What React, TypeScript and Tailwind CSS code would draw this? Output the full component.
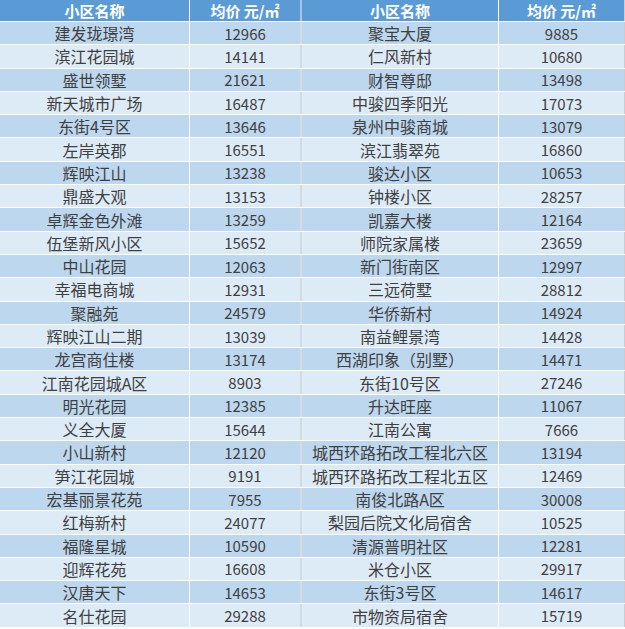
const rows: [string, string, string, string][] = [
  ["建发珑璟湾", "12966", "聚宝大厦", "9885"],
  ["滨江花园城", "14141", "仁风新村", "10680"],
  ["盛世领墅", "21621", "财智尊邸", "13498"],
  ["新天城市广场", "16487", "中骏四季阳光", "17073"],
  ["东街4号区", "13646", "泉州中骏商城", "13079"],
  ["左岸英郡", "16551", "滨江翡翠苑", "16860"],
  ["辉映江山", "13238", "骏达小区", "10653"],
  ["鼎盛大观", "13153", "钟楼小区", "28257"],
  ["卓辉金色外滩", "13259", "凯嘉大楼", "12164"],
  ["伍堡新风小区", "15652", "师院家属楼", "23659"],
  ["中山花园", "12063", "新门街南区", "12997"],
  ["幸福电商城", "12931", "三远荷墅", "28812"],
  ["聚融苑", "24579", "华侨新村", "14924"],
  ["辉映江山二期", "13039", "南益鲤景湾", "14428"],
  ["龙宫商住楼", "13174", "西湖印象（别墅）", "14471"],
  ["江南花园城A区", "8903", "东街10号区", "27246"],
  ["明光花园", "12385", "升达旺座", "11067"],
  ["义全大厦", "15644", "江南公寓", "7666"],
  ["小山新村", "12120", "城西环路拓改工程北六区", "13194"],
  ["笋江花园城", "9191", "城西环路拓改工程北五区", "12469"],
  ["宏基丽景花苑", "7955", "南俊北路A区", "30008"],
  ["红梅新村", "24077", "梨园后院文化局宿舍", "10525"],
  ["福隆星城", "10590", "清源普明社区", "12281"],
  ["迎辉花苑", "16608", "米仓小区", "29917"],
  ["汉唐天下", "14653", "东街3号区", "14617"],
  ["名仕花园", "29288", "市物资局宿舍", "15719"],
];

const font = "font-['Microsoft_YaHei','Noto_Sans_CJK_SC',sans-serif]";

export default function App() {
  return (
    <div className={`w-[625px] h-[629px] bg-white ${font} text-[15px] leading-none`}>
      <div className="flex h-[22px] bg-[#5b9bd5] border-b border-white font-bold text-white">
        <div className="w-[190px] flex items-center justify-center border-r border-white">小区名称</div>
        <div className="w-[112px] flex items-center justify-center border-r-2 border-[#a9c4de]">均价 元/㎡</div>
        <div className="w-[197px] flex items-center justify-center border-r border-white">小区名称</div>
        <div className="w-[126px] flex items-center justify-center border-r border-[#c8cdd2]">均价 元/㎡</div>
      </div>
      {rows.map((r, i) => (
        <div
          key={i}
          className={`flex h-[23.3px] border-b border-white text-[#404040] ${i % 2 === 0 ? "bg-[#bdd7ee]" : "bg-[#ddebf7]"}`}
        >
          <div className="w-[190px] flex items-center justify-center border-r border-white text-[16px]">{r[0]}</div>
          <div className="w-[112px] flex items-center justify-center border-r-2 border-[#d3dbe3]">{r[1]}</div>
          <div className="w-[197px] flex items-center justify-center border-r border-white text-[16px]">{r[2]}</div>
          <div className="w-[126px] flex items-center justify-center border-r border-[#c8cdd2]">{r[3]}</div>
        </div>
      ))}
    </div>
  );
}
